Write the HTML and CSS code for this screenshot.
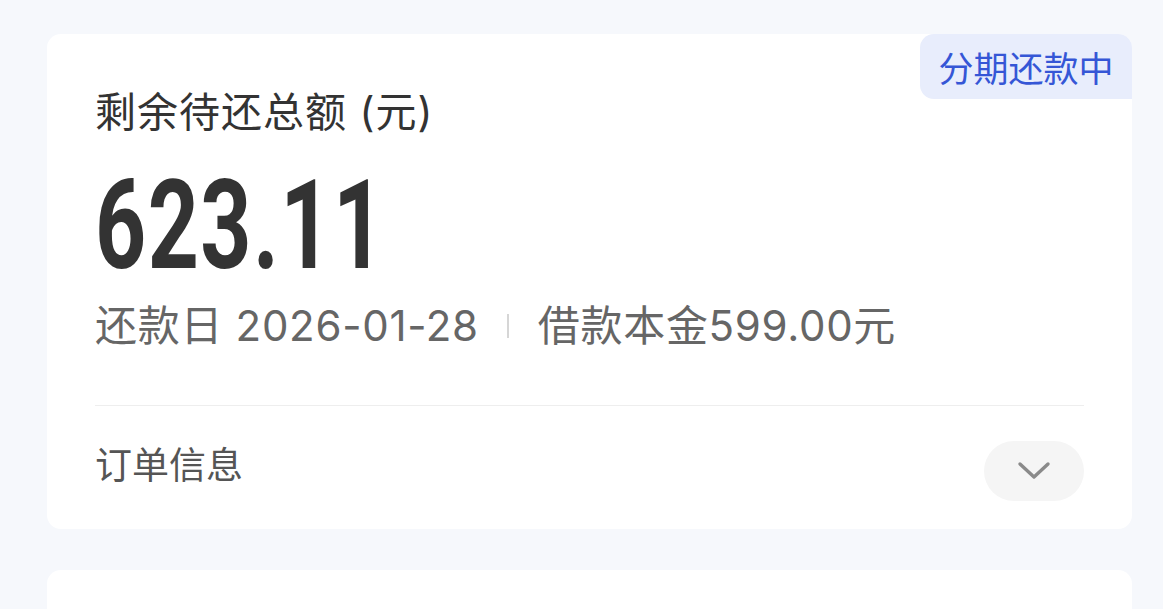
FILE: index.html
```html
<!DOCTYPE html>
<html lang="zh-CN">
<head>
<meta charset="utf-8">
<title>还款详情</title>
<link rel="stylesheet" href="styles.css">
</head>
<body>
<div class="page">
  <section class="card summary">
    <div class="badge">分期还款中</div>
    <div class="title">剩余待还总额 (元)</div>
    <div class="amount"><span class="amount-num">623.11</span></div>
    <div class="meta">
      <span class="meta-item">还款日 2026-01-28</span>
      <span class="sep"></span>
      <span class="meta-item">借款本金599.00元</span>
    </div>
    <div class="divider"></div>
    <div class="order-row">
      <span class="order-label">订单信息</span>
      <button class="toggle" type="button" aria-label="展开">
        <svg width="34" height="20" viewBox="0 0 34 20" fill="none">
          <path d="M3 3 L17 16 L31 3" stroke="#8a8a8a" stroke-width="3.4" stroke-linecap="round" stroke-linejoin="round"/>
        </svg>
      </button>
    </div>
  </section>
  <section class="card next"></section>
</div>
</body>
</html>
```

FILE: styles.css
```css
* { box-sizing: border-box; }

html, body {
  margin: 0;
  padding: 0;
  background: #f6f8fc;
  font-family: "Inter", "Noto Sans CJK SC", sans-serif;
  overflow: hidden;
}

.page {
  padding: 34px 31px 0 47px;
  display: flex;
  flex-direction: column;
  gap: 41px;
}

.card {
  background: #ffffff;
  border-radius: 14px;
}

.summary {
  position: relative;
  padding: 50px 48px 0 48px;
}

.badge {
  position: absolute;
  top: 0;
  right: 0;
  width: 212px;
  height: 65px;
  background: #e8edfc;
  border-radius: 14px 14px 0 14px;
  color: #3556d6;
  font-family: "Noto Sans CJK SC", sans-serif;
  font-size: 35px;
  line-height: 65px;
  text-align: center;
}

.title {
  font-size: 41px;
  line-height: 56px;
  color: #333333;
  letter-spacing: 1px;
}

.amount {
  margin-top: 24px;
  height: 124px;
  line-height: 124px;
}

.amount-num {
  display: inline-block;
  font-family: "Roboto", "Liberation Sans", sans-serif;
  font-weight: 700;
  font-size: 124px;
  line-height: 124px;
  color: #333333;
  transform: scaleX(0.72);
  transform-origin: left center;
  letter-spacing: 2px;
}

.meta {
  margin-top: 9px;
  display: flex;
  align-items: center;
  font-size: 42px;
  line-height: 58px;
  color: #666666;
  letter-spacing: 0.7px;
}

.sep {
  width: 2px;
  height: 24px;
  background: #d6d6d6;
  margin: 0 29px 0 28px;
}

.divider {
  margin-top: 50px;
  height: 1px;
  background: #eeeeee;
}

.order-row {
  display: flex;
  align-items: center;
  justify-content: space-between;
  padding: 35px 0 28px 0;
}

.order-label {
  font-size: 37px;
  line-height: 50px;
  color: #555555;
  margin-bottom: 10px;
}

.toggle {
  width: 100px;
  height: 60px;
  border: none;
  border-radius: 30px;
  background: #f5f5f5;
  display: flex;
  align-items: center;
  justify-content: center;
  padding: 0;
}

.next {
  height: 120px;
}
```
